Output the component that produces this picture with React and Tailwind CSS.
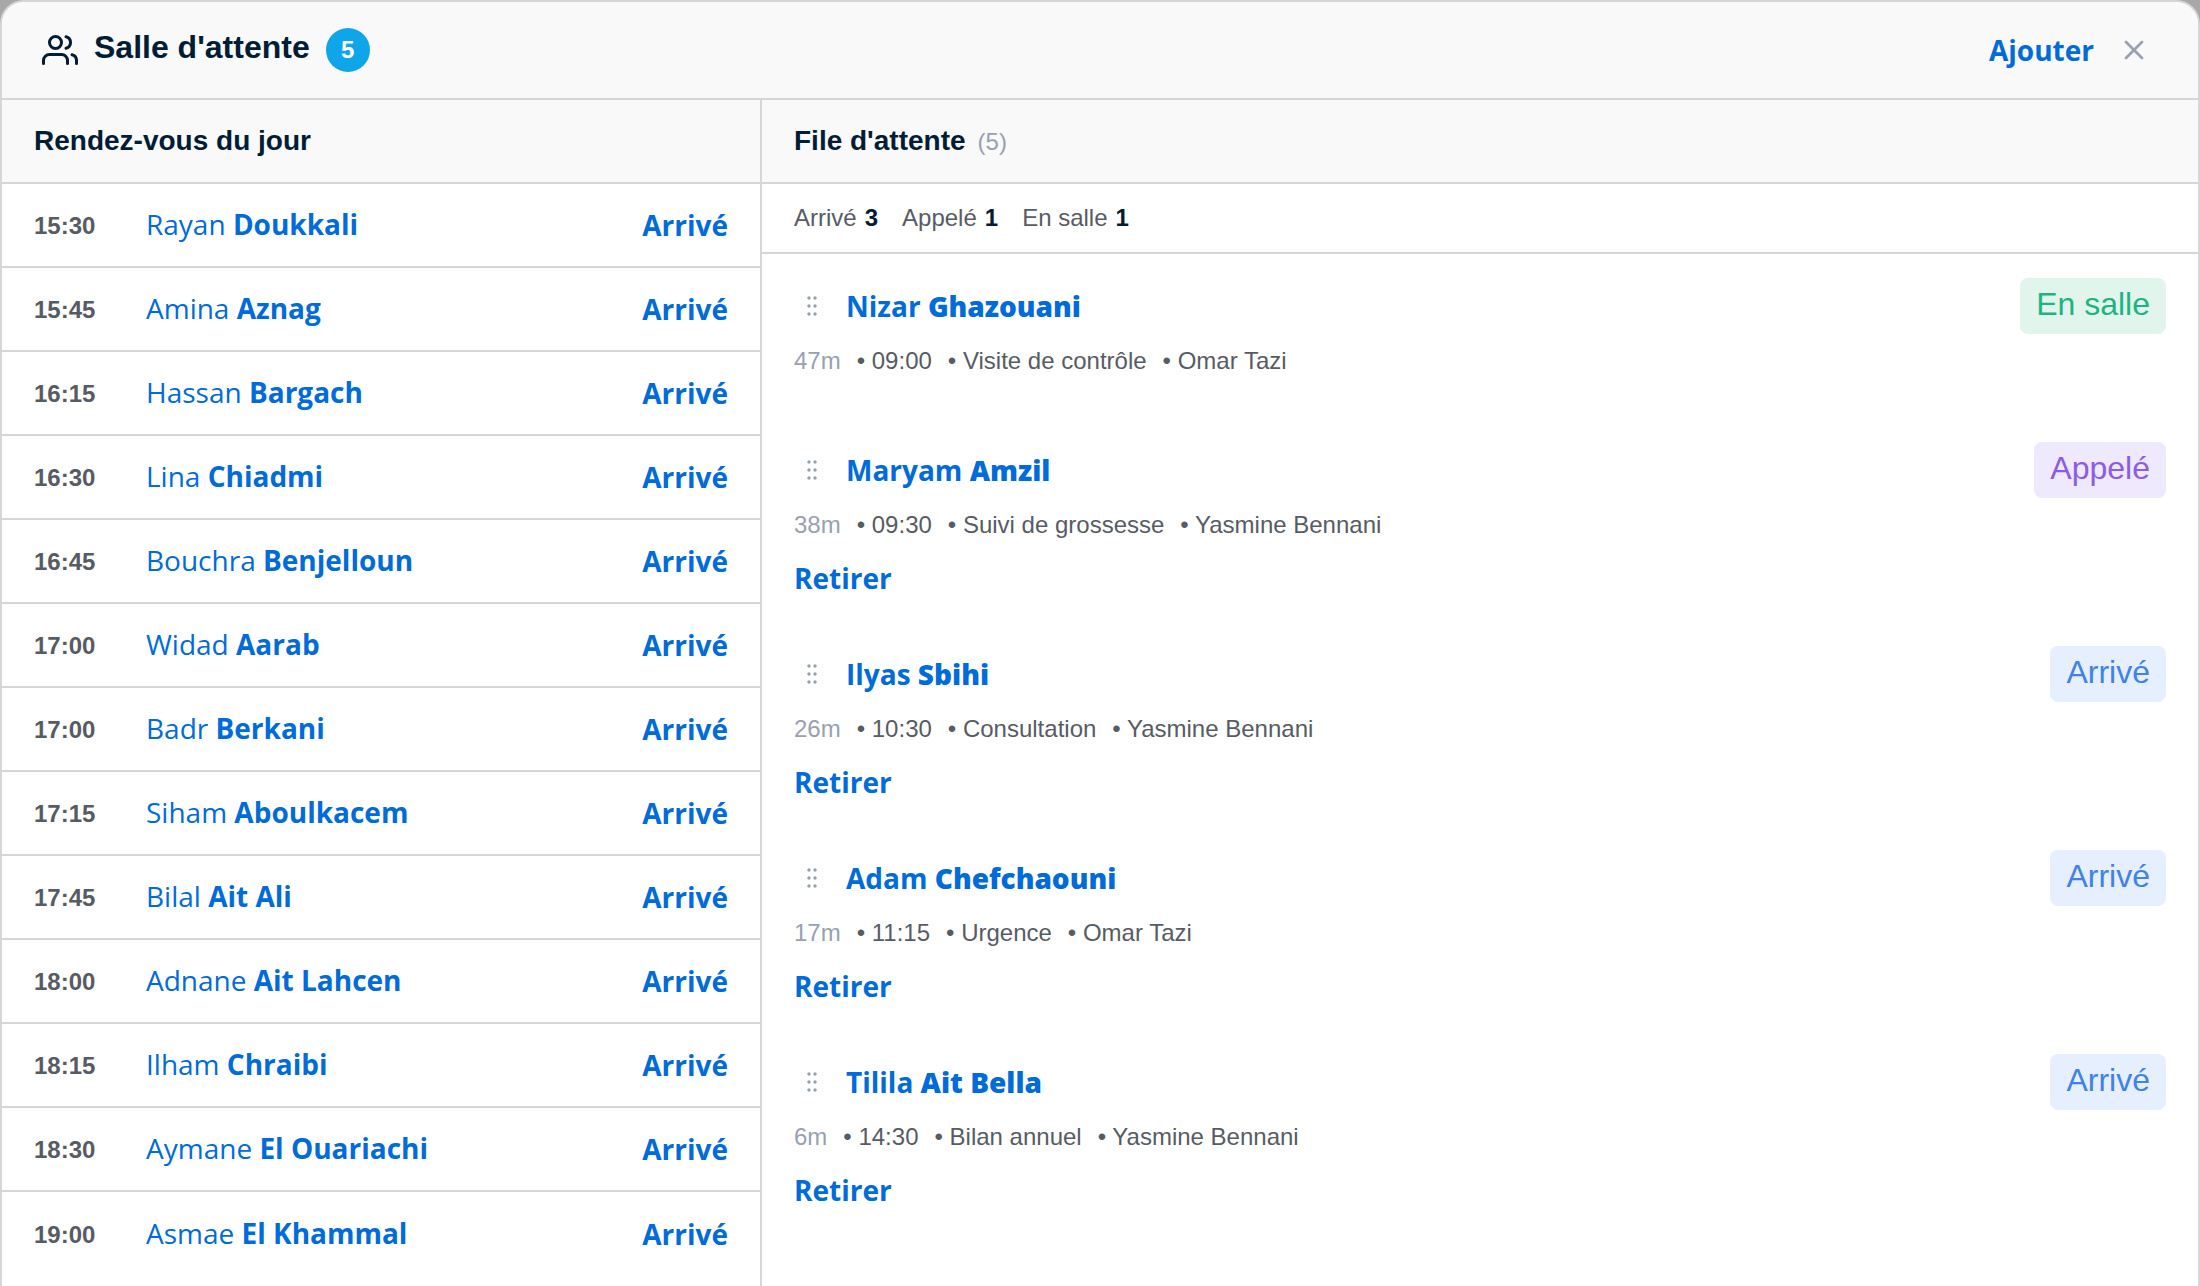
import React from "react";
import { FiUsers, FiX } from "react-icons/fi";

const appointments = [
  ["15:30", "Rayan", "Doukkali"],
  ["15:45", "Amina", "Aznag"],
  ["16:15", "Hassan", "Bargach"],
  ["16:30", "Lina", "Chiadmi"],
  ["16:45", "Bouchra", "Benjelloun"],
  ["17:00", "Widad", "Aarab"],
  ["17:00", "Badr", "Berkani"],
  ["17:15", "Siham", "Aboulkacem"],
  ["17:45", "Bilal", "Ait Ali"],
  ["18:00", "Adnane", "Ait Lahcen"],
  ["18:15", "Ilham", "Chraibi"],
  ["18:30", "Aymane", "El Ouariachi"],
  ["19:00", "Asmae", "El Khammal"],
];

const tones = {
  "En salle": "bg-[#e1f5ed] text-[#1db481]",
  "Appelé": "bg-[#efe9fe] text-[#8b5ce6]",
  "Arrivé": "bg-[#e6effe] text-[#3f82e8]",
};

const queue = [
  { first: "Nizar", last: "Ghazouani", status: "En salle", wait: "47m", details: ["09:00", "Visite de contrôle", "Omar Tazi"] },
  { first: "Maryam", last: "Amzil", status: "Appelé", wait: "38m", details: ["09:30", "Suivi de grossesse", "Yasmine Bennani"], removable: true },
  { first: "Ilyas", last: "Sbihi", status: "Arrivé", wait: "26m", details: ["10:30", "Consultation", "Yasmine Bennani"], removable: true },
  { first: "Adam", last: "Chefchaouni", status: "Arrivé", wait: "17m", details: ["11:15", "Urgence", "Omar Tazi"], removable: true },
  { first: "Tilila", last: "Ait Bella", status: "Arrivé", wait: "6m", details: ["14:30", "Bilan annuel", "Yasmine Bennani"], removable: true },
];

const counts = [["Arrivé", 3], ["Appelé", 1], ["En salle", 1]];

const buttonText = "font-['Open_Sans',sans-serif] text-[28px] leading-10 text-[#006bd9]";

function Grip() {
  return (
    <svg width="12" height="22" viewBox="0 0 12 22" fill="#98a1b0" aria-hidden="true">
      {[3, 11, 19].map((y) => (
        <g key={y}>
          <circle cx="3" cy={y} r="1.7" />
          <circle cx="9" cy={y} r="1.7" />
        </g>
      ))}
    </svg>
  );
}

export default function App() {
  return (
    <div className="h-screen overflow-hidden bg-[#a8a8a8] font-['Liberation_Sans',Arial,sans-serif] text-[#001d35]">
      <main className="flex h-full flex-col overflow-hidden rounded-t-3xl border-2 border-b-0 border-[#d4d6d8] bg-white">
        <header className="flex h-[98px] shrink-0 items-center border-b-2 border-[#d4d6d8] bg-[#f9f9f9] pr-12 pl-10">
          <FiUsers className="size-9" aria-hidden="true" />
          <h1 className="ml-4 pb-1.5 text-[32px] leading-10 font-bold">Salle d'attente</h1>
          <span className="ml-4 flex size-11 items-center justify-center rounded-full bg-[#0ea5e9] text-2xl font-bold text-white">5</span>
          <button type="button" className={`${buttonText} ml-auto font-bold`}>Ajouter</button>
          <button type="button" aria-label="Fermer" className="ml-6 text-[#98a1b0]">
            <FiX className="size-8" />
          </button>
        </header>

        <div className="flex min-h-0 flex-1">
          <section className="w-[760px] shrink-0 border-r-2 border-[#d4d6d8]">
            <div className="flex h-[84px] items-center border-b-2 border-[#d4d6d8] bg-[#f9f9f9] px-8">
              <h2 className="text-[28px] leading-10 font-bold">Rendez-vous du jour</h2>
            </div>
            <ul className="divide-y-2 divide-[#d4d6d8]">
              {appointments.map(([time, first, last]) => (
                <li key={first} className="flex h-[84px] items-center px-8">
                  <time className="w-28 pt-0.5 text-2xl font-bold text-[#575c64]">{time}</time>
                  <button type="button" className={`${buttonText} pb-0.5 font-normal`}>
                    {first} <span className="font-bold">{last}</span>
                  </button>
                  <button type="button" className={`${buttonText} ml-auto font-bold`}>Arrivé</button>
                </li>
              ))}
            </ul>
          </section>

          <section className="min-w-0 flex-1">
            <div className="flex h-[84px] items-center gap-3 border-b-2 border-[#d4d6d8] bg-[#f9f9f9] px-8">
              <h2 className="text-[28px] leading-10 font-bold">File d'attente</h2>
              <span className="pt-0.5 text-2xl text-[#98a1b0]">(5)</span>
            </div>
            <div className="flex h-[70px] items-center gap-6 border-b-2 border-[#d4d6d8] px-8 text-2xl text-[#575c64]">
              {counts.map(([label, n]) => (
                <span key={label} className="flex gap-2">
                  {label} <strong className="text-[#001d35]">{n}</strong>
                </span>
              ))}
            </div>
            <ul>
              {queue.map((p) => (
                <li key={p.first} className="px-8 py-6">
                  <div className="flex h-14 items-center">
                    <span className="flex w-9 cursor-grab justify-center">
                      <Grip />
                    </span>
                    <button type="button" className={`${buttonText} ml-4 font-bold`}>
                      {p.first} <span className="font-extrabold">{p.last}</span>
                    </button>
                    <span className={`ml-auto h-14 rounded-lg px-4 pt-1 text-[32px] leading-11 ${tones[p.status]}`}>{p.status}</span>
                  </div>
                  <p className="mt-2 mb-3.5 flex gap-4 text-2xl leading-[38px] text-[#575c64]">
                    <span className="text-[#98a1b0]">{p.wait}</span>
                    {p.details.map((d) => (
                      <span key={d}>• {d}</span>
                    ))}
                  </p>
                  {p.removable ? <button type="button" className={`${buttonText} block font-bold`}>Retirer</button> : null}
                </li>
              ))}
            </ul>
          </section>
        </div>
      </main>
    </div>
  );
}
